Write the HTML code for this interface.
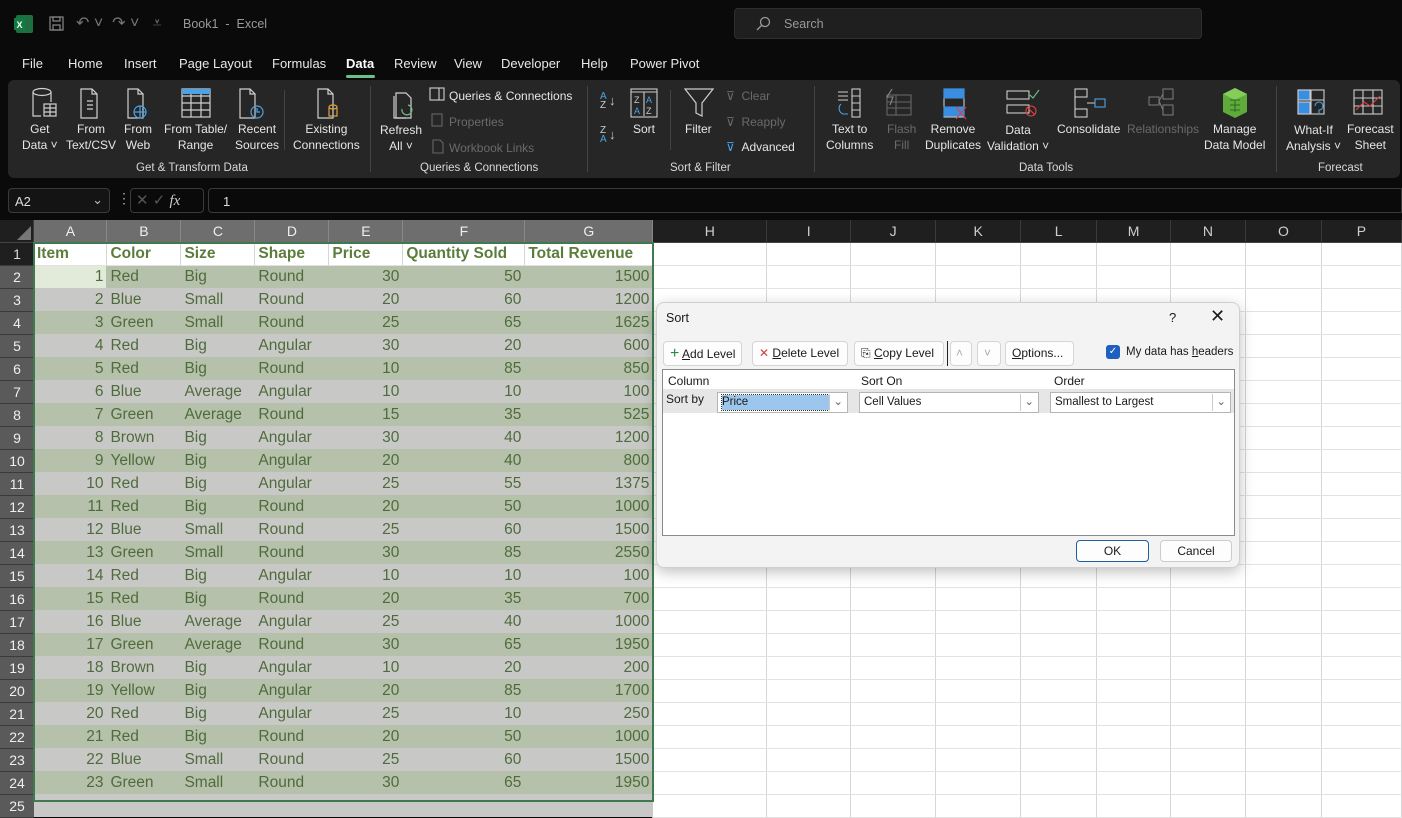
<!DOCTYPE html>
<html><head><meta charset="utf-8">
<style>
*{box-sizing:border-box;margin:0;padding:0}
body{width:1402px;height:793px;overflow:hidden;background:#0a0a0a;font-family:"Liberation Sans",sans-serif;position:relative;color:#ddd}
.abs{position:absolute}
.tab{position:absolute;top:56px;font-size:13px;color:#e8e8e8}
.rib{position:absolute;left:8px;top:80px;width:1392px;height:98px;background:#262626;border-radius:6px}
.btn{position:absolute;font-size:12px;color:#e6e6e6;text-align:center;line-height:16px;white-space:nowrap}
.dis{color:#6a6a6a}
.grp{position:absolute;top:162px;font-size:11.5px;color:#d8d8d8;white-space:nowrap}
.sep{position:absolute;top:86px;width:1px;height:86px;background:#444}
.sm{position:absolute;font-size:12px;white-space:nowrap}
table{border-collapse:collapse;table-layout:fixed;position:absolute;left:0;top:220px;font-family:"Liberation Sans Narrow","Liberation Sans",sans-serif;font-size:15.5px}
td{height:23px;padding:0 3px;white-space:nowrap;overflow:hidden;border-right:1px solid #d6d6d6;border-bottom:1px solid #e2e2e2;color:#fff;background:#fff}
tr.h td{height:22px;background:#1f1f1f;color:#cfcfcf;text-align:center;border-right:1px solid #3a3a3a;border-bottom:1px solid #444;font-family:"Liberation Sans",sans-serif;font-size:14px}
tr.h td.s{background:#6e6e6e;color:#eee;border-right:1px solid #888}
td.rh{background:#5a5a5a;color:#eee;text-align:center;border-right:none;border-bottom:1px solid #3a3a3a;font-family:"Liberation Sans",sans-serif;font-size:14px}
tr.hd td.d{color:#5b7d3c;font-weight:bold;background:#fff}
tr.g td.d{background:#b5c1aa;color:#4f6b3c;border-right:1px solid #b5c1aa;border-bottom:none}
tr.y td.d{background:#c8c9c6;color:#4f6b3c;border-right:1px solid #c8c9c6;border-bottom:none}
td.r{text-align:right}
.dlg{position:absolute;left:656px;top:302px;width:584px;height:266px;background:#f3f3f3;border:1px solid #d0d0d0;border-radius:8px;box-shadow:0 4px 14px rgba(0,0,0,.25);color:#1a1a1a;font-size:12px}
.db{position:absolute;top:38px;height:25px;background:#fdfdfd;border:1px solid #d5d5d5;border-radius:4px;font-size:12px;line-height:23px;padding-left:6px;color:#1a1a1a;white-space:nowrap}
.cb{position:absolute;top:89px;height:21px;background:#fff;border:1px solid #b5b5b5;font-size:11.5px;line-height:19px;padding-left:4px}
.arr{position:absolute;right:1px;top:1px;width:17px;height:17px;border-left:1px solid #ccc}
</style></head><body>
<svg class="abs" style="left:14px;top:14px" width="20" height="20"><rect x="2" y="1" width="17" height="18" rx="2" fill="#1d6f42"/><rect x="0" y="4" width="11" height="12" fill="#107c41"/><text x="2.5" y="14" font-size="9" fill="#fff" font-family="Liberation Sans" font-weight="bold">X</text></svg>
<svg class="abs" style="left:48px;top:15px" width="18" height="18" fill="none" stroke="#8a8a8a" stroke-width="1.2"><rect x="2" y="2" width="13" height="13"/><rect x="5" y="2" width="7" height="4"/><rect x="5" y="10" width="7" height="5"/></svg>
<div class="abs" style="left:76px;top:13px;font-size:16px;color:#777">↶ ˅ &nbsp;↷ ˅ &nbsp; ⩡</div>
<div class="abs" style="left:183px;top:17px;font-size:12.5px;color:#9a9a9a">Book1 &nbsp;-&nbsp; Excel</div>
<div class="abs" style="left:734px;top:8px;width:468px;height:31px;background:#1f1f1f;border:1px solid #2e2e2e;border-radius:4px"></div>
<svg class="abs" style="left:755px;top:16px" width="16" height="16" fill="none" stroke="#999" stroke-width="1.3"><circle cx="10" cy="6" r="4.5"/><path d="M7 9 L2 14"/></svg>
<div class="abs" style="left:784px;top:17px;font-size:12.5px;color:#999">Search</div>
<div class="tab" style="left:22px">File</div>
<div class="tab" style="left:68px">Home</div>
<div class="tab" style="left:124px">Insert</div>
<div class="tab" style="left:179px">Page Layout</div>
<div class="tab" style="left:272px">Formulas</div>
<div class="tab" style="left:346px;font-weight:bold;color:#fff">Data</div>
<div class="abs" style="left:346px;top:75px;width:29px;height:3px;background:#6fbf8a;border-radius:2px"></div>
<div class="tab" style="left:394px">Review</div>
<div class="tab" style="left:454px">View</div>
<div class="tab" style="left:501px">Developer</div>
<div class="tab" style="left:581px">Help</div>
<div class="tab" style="left:630px">Power Pivot</div>
<div class="rib"></div>
<svg class="abs" style="left:24px;top:87px" width="420" height="40" fill="none" stroke="#d0d0d0" stroke-width="1.2">
<ellipse cx="18" cy="5" rx="9" ry="3.5"/><path d="M9 5v24h8M27 5v10"/><rect x="20" y="17" width="12" height="12"/><path d="M20 21h12M20 25h12M26 17v12"/>
<path d="M57 2h11l5 5v24h-16z M68 2v5h5"/><path d="M63 14h6M63 18h6M63 22h6"/>
<path d="M104 2h10l5 5v24h-15z M114 2v5h5"/><circle cx="116" cy="25" r="6" stroke="#4aa3e8"/><path d="M110 25h12M116 19v12" stroke="#4aa3e8"/>
<rect x="158" y="2" width="28" height="28"/><path d="M158 9h28M158 16h28M158 23h28M167 2v28M177 2v28"/><rect x="158" y="2" width="28" height="5" fill="#4aa3e8" stroke="none"/>
<path d="M216 2h10l5 5v24h-15z M226 2v5h5"/><circle cx="233" cy="25" r="6" stroke="#4aa3e8"/><path d="M233 21v4h3" stroke="#4aa3e8"/>
<path d="M294 2h10l5 5v24h-15z M304 2v5h5"/><ellipse cx="309" cy="20" rx="4" ry="2" stroke="#e0a040"/><path d="M305 20v9h8v-9" stroke="#e0a040"/>
<path d="M372 6h10l5 5v20h-15z"/><path d="M370 9v22h12"/><path d="M378 22a5 5 0 1 0 6 -4" stroke="#6fbf8a"/>
</svg>
<div class="btn" style="left:22px;top:121px">Get<br>Data ˅</div>
<div class="btn" style="left:66px;top:121px">From<br>Text/CSV</div>
<div class="btn" style="left:124px;top:121px">From<br>Web</div>
<div class="btn" style="left:164px;top:121px">From Table/<br>Range</div>
<div class="btn" style="left:235px;top:121px">Recent<br>Sources</div>
<div class="btn" style="left:293px;top:121px">Existing<br>Connections</div>
<div class="btn" style="left:380px;top:122px">Refresh<br>All ˅</div>
<div class="sep" style="left:284px;top:90px;height:60px"></div>
<div class="grp" style="left:136px">Get &amp; Transform Data</div>
<div class="sep" style="left:370px"></div>
<svg class="abs" style="left:429px;top:87px" width="18" height="70" fill="none" stroke="#d0d0d0" stroke-width="1.1"><rect x="1" y="1" width="14" height="12"/><path d="M10 1v12"/><rect x="3" y="27" width="10" height="12" stroke="#666"/><path d="M4 53h7l3 3v10h-10z" stroke="#666"/></svg>
<div class="sm" style="left:449px;top:89px;color:#e6e6e6">Queries &amp; Connections</div>
<div class="sm dis" style="left:449px;top:115px">Properties</div>
<div class="sm dis" style="left:449px;top:141px">Workbook Links</div>
<div class="grp" style="left:420px">Queries &amp; Connections</div>
<div class="sep" style="left:587px"></div>
<div class="abs" style="left:600px;top:92px;font-size:10px;line-height:9px;color:#4aa3e8">A<br><span style="color:#ccc">Z</span></div><div class="abs" style="left:609px;top:93px;color:#ccc;font-size:13px">↓</div>
<div class="abs" style="left:600px;top:126px;font-size:10px;line-height:9px;color:#ccc">Z<br><span style="color:#4aa3e8">A</span></div><div class="abs" style="left:609px;top:127px;color:#ccc;font-size:13px">↓</div>
<svg class="abs" style="left:630px;top:88px" width="28" height="30" fill="none" stroke="#ccc" stroke-width="1.1"><rect x="1" y="1" width="26" height="28"/><path d="M14 4v24M1 4h26"/><text x="4" y="15" font-size="9" fill="#ccc" stroke="none">Z</text><text x="4" y="26" font-size="9" fill="#4aa3e8" stroke="none">A</text><text x="16" y="15" font-size="9" fill="#4aa3e8" stroke="none">A</text><text x="16" y="26" font-size="9" fill="#ccc" stroke="none">Z</text></svg>
<div class="btn" style="left:633px;top:121px">Sort</div>
<div class="sep" style="left:670px;top:90px;height:60px"></div>
<svg class="abs" style="left:684px;top:88px" width="30" height="30" fill="none" stroke="#ccc" stroke-width="1.2"><path d="M1 1h28l-11 14v13l-6-3v-10z"/></svg>
<div class="btn" style="left:685px;top:121px">Filter</div>
<div class="sm dis" style="left:726px;top:89px">⊽ &nbsp;Clear</div>
<div class="sm dis" style="left:726px;top:115px">⊽ &nbsp;Reapply</div>
<div class="sm" style="left:726px;top:140px;color:#e6e6e6"><span style="color:#4aa3e8">⊽</span> &nbsp;Advanced</div>
<div class="grp" style="left:670px">Sort &amp; Filter</div>
<div class="sep" style="left:814px"></div>
<svg class="abs" style="left:832px;top:87px" width="400" height="34" fill="none" stroke="#ccc" stroke-width="1.1">
<rect x="20" y="2" width="8" height="28"/><path d="M20 9h8M20 16h8M20 23h8M6 5h10M6 9h10M6 13h10"/><path d="M9 17a6 6 0 0 0 2 10h5" stroke="#4aa3e8"/>
<rect x="55" y="8" width="24" height="20" stroke="#666"/><path d="M55 15h24M55 21h24M64 8v20" stroke="#666"/><path d="M60 2l-5 8h6l-3 8" stroke="#888"/>
<rect x="112" y="2" width="20" height="28"/><rect x="112" y="2" width="20" height="9" fill="#3a8ee0" stroke="#3a8ee0"/><rect x="112" y="20" width="20" height="9" fill="#3a8ee0" stroke="#3a8ee0"/><path d="M124 20l10 12M134 20l-10 12" stroke="#e04040"/>
<rect x="175" y="4" width="22" height="8"/><rect x="175" y="18" width="22" height="8"/><path d="M198 8l3 3 6-8" stroke="#6fbf8a"/><circle cx="199" cy="24" r="5" stroke="#e04040"/><path d="M195 20l8 8" stroke="#e04040"/>
<rect x="243" y="2" width="12" height="8"/><rect x="243" y="22" width="12" height="8"/><path d="M243 10v12M255 16h8"/><rect x="263" y="12" width="10" height="8" stroke="#4aa3e8"/>
<g stroke="#777"><rect x="317" y="10" width="10" height="8"/><rect x="331" y="2" width="10" height="10"/><rect x="331" y="18" width="10" height="10"/><path d="M327 14l4-7M327 14l4 9"/></g>
</svg>
<svg class="abs" style="left:1221px;top:87px" width="28" height="32"><path d="M14 1l12 6v18l-12 6-12-6v-18z" fill="#5eaa3a"/><path d="M14 1l12 6-12 6-12-6z" fill="#86cc5a"/><path d="M9 13h10M9 18h10M9 23h10M14 13v12" stroke="#2f6a1c" stroke-width="1"/></svg>
<div class="btn" style="left:826px;top:121px">Text to<br>Columns</div>
<div class="btn dis" style="left:887px;top:121px">Flash<br>Fill</div>
<div class="btn" style="left:925px;top:121px">Remove<br>Duplicates</div>
<div class="btn" style="left:987px;top:122px">Data<br>Validation ˅</div>
<div class="btn" style="left:1057px;top:121px">Consolidate</div>
<div class="btn dis" style="left:1127px;top:121px">Relationships</div>
<div class="btn" style="left:1204px;top:121px">Manage<br>Data Model</div>
<div class="grp" style="left:1019px">Data Tools</div>
<div class="sep" style="left:1276px"></div>
<svg class="abs" style="left:1297px;top:88px" width="100" height="32" fill="none" stroke="#ccc" stroke-width="1.1"><rect x="1" y="2" width="26" height="24"/><rect x="1" y="2" width="12" height="10" fill="#3a8ee0"/><rect x="1" y="14" width="12" height="12" fill="#3a8ee0"/><path d="M1 12h26M14 2v24"/><path d="M18 18a4 4 0 1 1 4 4v4" stroke="#4aa3e8"/>
<rect x="57" y="2" width="28" height="24"/><path d="M57 10h28M57 18h28M66 2v24M76 2v24"/><path d="M59 22l8-8 6 4 10-10" stroke="#e04040"/></svg>
<div class="btn" style="left:1286px;top:122px">What-If<br>Analysis ˅</div>
<div class="btn" style="left:1347px;top:121px">Forecast<br>Sheet</div>
<div class="grp" style="left:1318px">Forecast</div>
<div class="abs" style="left:8px;top:188px;width:102px;height:25px;border:1px solid #3a3a3a;border-radius:4px;background:#141414;font-size:13px;color:#ddd;padding:5px 6px">A2<span style="position:absolute;right:6px;top:3px;color:#bbb">⌄</span></div>
<div class="abs" style="left:117px;top:190px;color:#aaa;font-size:14px">⋮</div>
<div class="abs" style="left:130px;top:188px;width:74px;height:25px;border:1px solid #3a3a3a;border-radius:4px;font-size:15px;color:#555;padding:2px 5px">✕ ✓ <i style="color:#ccc;font-family:'Liberation Serif',serif">fx</i></div>
<div class="abs" style="left:208px;top:188px;width:1194px;height:25px;border:1px solid #3a3a3a;border-radius:4px 0 0 4px;font-size:13px;color:#ddd;padding:5px 14px">1</div>
<table>
<colgroup><col style="width:34px"><col style="width:73px"><col style="width:74px"><col style="width:74px"><col style="width:74px"><col style="width:74px"><col style="width:122px"><col style="width:128px"><col style="width:114px"><col style="width:84px"><col style="width:85px"><col style="width:85px"><col style="width:76px"><col style="width:74px"><col style="width:75px"><col style="width:76px"><col style="width:80px"></colgroup>
<tr class="h"><td style="background:#1f1f1f;position:relative"><svg style="position:absolute;right:2px;bottom:2px" width="14" height="14"><path d="M14 0v14h-14z" fill="#777"/></svg></td><td class="s">A</td><td class="s">B</td><td class="s">C</td><td class="s">D</td><td class="s">E</td><td class="s">F</td><td class="s">G</td><td>H</td><td>I</td><td>J</td><td>K</td><td>L</td><td>M</td><td>N</td><td>O</td><td>P</td></tr>
<tr class="hd"><td class="rh" style="background:#1f1f1f;color:#ddd">1</td><td class="d">Item</td><td class="d">Color</td><td class="d">Size</td><td class="d">Shape</td><td class="d">Price</td><td class="d">Quantity Sold</td><td class="d">Total Revenue</td><td></td><td></td><td></td><td></td><td></td><td></td><td></td><td></td><td></td></tr>
<tr class="g"><td class="rh">2</td><td class="d r" style="background:#e2ebda">1</td><td class="d">Red</td><td class="d">Big</td><td class="d">Round</td><td class="d r">30</td><td class="d r">50</td><td class="d r">1500</td><td></td><td></td><td></td><td></td><td></td><td></td><td></td><td></td><td></td></tr>
<tr class="y"><td class="rh">3</td><td class="d r">2</td><td class="d">Blue</td><td class="d">Small</td><td class="d">Round</td><td class="d r">20</td><td class="d r">60</td><td class="d r">1200</td><td></td><td></td><td></td><td></td><td></td><td></td><td></td><td></td><td></td></tr>
<tr class="g"><td class="rh">4</td><td class="d r">3</td><td class="d">Green</td><td class="d">Small</td><td class="d">Round</td><td class="d r">25</td><td class="d r">65</td><td class="d r">1625</td><td></td><td></td><td></td><td></td><td></td><td></td><td></td><td></td><td></td></tr>
<tr class="y"><td class="rh">5</td><td class="d r">4</td><td class="d">Red</td><td class="d">Big</td><td class="d">Angular</td><td class="d r">30</td><td class="d r">20</td><td class="d r">600</td><td></td><td></td><td></td><td></td><td></td><td></td><td></td><td></td><td></td></tr>
<tr class="g"><td class="rh">6</td><td class="d r">5</td><td class="d">Red</td><td class="d">Big</td><td class="d">Round</td><td class="d r">10</td><td class="d r">85</td><td class="d r">850</td><td></td><td></td><td></td><td></td><td></td><td></td><td></td><td></td><td></td></tr>
<tr class="y"><td class="rh">7</td><td class="d r">6</td><td class="d">Blue</td><td class="d">Average</td><td class="d">Angular</td><td class="d r">10</td><td class="d r">10</td><td class="d r">100</td><td></td><td></td><td></td><td></td><td></td><td></td><td></td><td></td><td></td></tr>
<tr class="g"><td class="rh">8</td><td class="d r">7</td><td class="d">Green</td><td class="d">Average</td><td class="d">Round</td><td class="d r">15</td><td class="d r">35</td><td class="d r">525</td><td></td><td></td><td></td><td></td><td></td><td></td><td></td><td></td><td></td></tr>
<tr class="y"><td class="rh">9</td><td class="d r">8</td><td class="d">Brown</td><td class="d">Big</td><td class="d">Angular</td><td class="d r">30</td><td class="d r">40</td><td class="d r">1200</td><td></td><td></td><td></td><td></td><td></td><td></td><td></td><td></td><td></td></tr>
<tr class="g"><td class="rh">10</td><td class="d r">9</td><td class="d">Yellow</td><td class="d">Big</td><td class="d">Angular</td><td class="d r">20</td><td class="d r">40</td><td class="d r">800</td><td></td><td></td><td></td><td></td><td></td><td></td><td></td><td></td><td></td></tr>
<tr class="y"><td class="rh">11</td><td class="d r">10</td><td class="d">Red</td><td class="d">Big</td><td class="d">Angular</td><td class="d r">25</td><td class="d r">55</td><td class="d r">1375</td><td></td><td></td><td></td><td></td><td></td><td></td><td></td><td></td><td></td></tr>
<tr class="g"><td class="rh">12</td><td class="d r">11</td><td class="d">Red</td><td class="d">Big</td><td class="d">Round</td><td class="d r">20</td><td class="d r">50</td><td class="d r">1000</td><td></td><td></td><td></td><td></td><td></td><td></td><td></td><td></td><td></td></tr>
<tr class="y"><td class="rh">13</td><td class="d r">12</td><td class="d">Blue</td><td class="d">Small</td><td class="d">Round</td><td class="d r">25</td><td class="d r">60</td><td class="d r">1500</td><td></td><td></td><td></td><td></td><td></td><td></td><td></td><td></td><td></td></tr>
<tr class="g"><td class="rh">14</td><td class="d r">13</td><td class="d">Green</td><td class="d">Small</td><td class="d">Round</td><td class="d r">30</td><td class="d r">85</td><td class="d r">2550</td><td></td><td></td><td></td><td></td><td></td><td></td><td></td><td></td><td></td></tr>
<tr class="y"><td class="rh">15</td><td class="d r">14</td><td class="d">Red</td><td class="d">Big</td><td class="d">Angular</td><td class="d r">10</td><td class="d r">10</td><td class="d r">100</td><td></td><td></td><td></td><td></td><td></td><td></td><td></td><td></td><td></td></tr>
<tr class="g"><td class="rh">16</td><td class="d r">15</td><td class="d">Red</td><td class="d">Big</td><td class="d">Round</td><td class="d r">20</td><td class="d r">35</td><td class="d r">700</td><td></td><td></td><td></td><td></td><td></td><td></td><td></td><td></td><td></td></tr>
<tr class="y"><td class="rh">17</td><td class="d r">16</td><td class="d">Blue</td><td class="d">Average</td><td class="d">Angular</td><td class="d r">25</td><td class="d r">40</td><td class="d r">1000</td><td></td><td></td><td></td><td></td><td></td><td></td><td></td><td></td><td></td></tr>
<tr class="g"><td class="rh">18</td><td class="d r">17</td><td class="d">Green</td><td class="d">Average</td><td class="d">Round</td><td class="d r">30</td><td class="d r">65</td><td class="d r">1950</td><td></td><td></td><td></td><td></td><td></td><td></td><td></td><td></td><td></td></tr>
<tr class="y"><td class="rh">19</td><td class="d r">18</td><td class="d">Brown</td><td class="d">Big</td><td class="d">Angular</td><td class="d r">10</td><td class="d r">20</td><td class="d r">200</td><td></td><td></td><td></td><td></td><td></td><td></td><td></td><td></td><td></td></tr>
<tr class="g"><td class="rh">20</td><td class="d r">19</td><td class="d">Yellow</td><td class="d">Big</td><td class="d">Angular</td><td class="d r">20</td><td class="d r">85</td><td class="d r">1700</td><td></td><td></td><td></td><td></td><td></td><td></td><td></td><td></td><td></td></tr>
<tr class="y"><td class="rh">21</td><td class="d r">20</td><td class="d">Red</td><td class="d">Big</td><td class="d">Angular</td><td class="d r">25</td><td class="d r">10</td><td class="d r">250</td><td></td><td></td><td></td><td></td><td></td><td></td><td></td><td></td><td></td></tr>
<tr class="g"><td class="rh">22</td><td class="d r">21</td><td class="d">Red</td><td class="d">Big</td><td class="d">Round</td><td class="d r">20</td><td class="d r">50</td><td class="d r">1000</td><td></td><td></td><td></td><td></td><td></td><td></td><td></td><td></td><td></td></tr>
<tr class="y"><td class="rh">23</td><td class="d r">22</td><td class="d">Blue</td><td class="d">Small</td><td class="d">Round</td><td class="d r">25</td><td class="d r">60</td><td class="d r">1500</td><td></td><td></td><td></td><td></td><td></td><td></td><td></td><td></td><td></td></tr>
<tr class="g"><td class="rh">24</td><td class="d r">23</td><td class="d">Green</td><td class="d">Small</td><td class="d">Round</td><td class="d r">30</td><td class="d r">65</td><td class="d r">1950</td><td></td><td></td><td></td><td></td><td></td><td></td><td></td><td></td><td></td></tr>
<tr class="y"><td class="rh">25</td><td class="d r"></td><td class="d"></td><td class="d"></td><td class="d"></td><td class="d r"></td><td class="d r"></td><td class="d r"></td><td></td><td></td><td></td><td></td><td></td><td></td><td></td><td></td><td></td></tr>
</table>
<div class="abs" style="left:33px;top:242px;width:621px;height:560px;border:2px solid #3f7a4e"></div>
<div class="dlg">
<div class="abs" style="left:9px;top:8px;font-size:12.5px">Sort</div>
<div class="abs" style="left:512px;top:7px;font-size:13px">?</div>
<div class="abs" style="left:553px;top:3px;font-size:18px">✕</div>
<div class="db" style="left:6px;width:79px"><span style="color:#2a8a3a;font-size:16px">+</span> <u>A</u>dd Level</div>
<div class="db" style="left:95px;width:96px"><span style="color:#d04040">✕</span> <u>D</u>elete Level</div>
<div class="db" style="left:197px;width:90px">⎘ <u>C</u>opy Level</div>
<div class="abs" style="left:290px;top:38px;width:1px;height:25px;background:#222"></div>
<div class="db" style="left:293px;width:22px;color:#aaa;padding-left:5px">˄</div>
<div class="db" style="left:320px;width:24px;color:#aaa;padding-left:6px">˅</div>
<div class="db" style="left:348px;width:69px"><u>O</u>ptions...</div>
<div class="abs" style="left:449px;top:42px;width:14px;height:14px;background:#1f5fbf;border-radius:3px;color:#fff;font-size:10px;text-align:center;line-height:14px">✓</div>
<div class="abs" style="left:469px;top:43px;white-space:nowrap;font-size:11.5px">My data has <u>h</u>eaders</div>
<div class="abs" style="left:5px;top:66px;width:573px;height:167px;background:#fff;border:1px solid #8a8a8a"></div>
<div class="abs" style="left:11px;top:71px">Column</div>
<div class="abs" style="left:204px;top:71px">Sort On</div>
<div class="abs" style="left:397px;top:71px">Order</div>
<div class="abs" style="left:6px;top:86px;width:571px;height:24px;background:#e6e6e6"></div>
<div class="abs" style="left:9px;top:89px">Sort by</div>
<div class="cb" style="left:60px;width:131px"><span style="background:#9cc6ec;outline:1px dotted #333;display:inline-block;width:107px;line-height:15px">Price</span><span class="arr"></span><span style="position:absolute;right:4px;top:0;color:#666">⌄</span></div>
<div class="cb" style="left:202px;width:180px">Cell Values<span class="arr"></span><span style="position:absolute;right:4px;top:0;color:#666">⌄</span></div>
<div class="cb" style="left:393px;width:181px">Smallest to Largest<span class="arr"></span><span style="position:absolute;right:4px;top:0;color:#666">⌄</span></div>
<div class="abs" style="left:419px;top:237px;width:73px;height:22px;background:#fdfdfd;border:1px solid #1f5fa0;border-radius:4px;text-align:center;line-height:20px">OK</div>
<div class="abs" style="left:503px;top:237px;width:72px;height:22px;background:#fdfdfd;border:1px solid #ccc;border-radius:4px;text-align:center;line-height:20px">Cancel</div>
</div>
</body></html>
